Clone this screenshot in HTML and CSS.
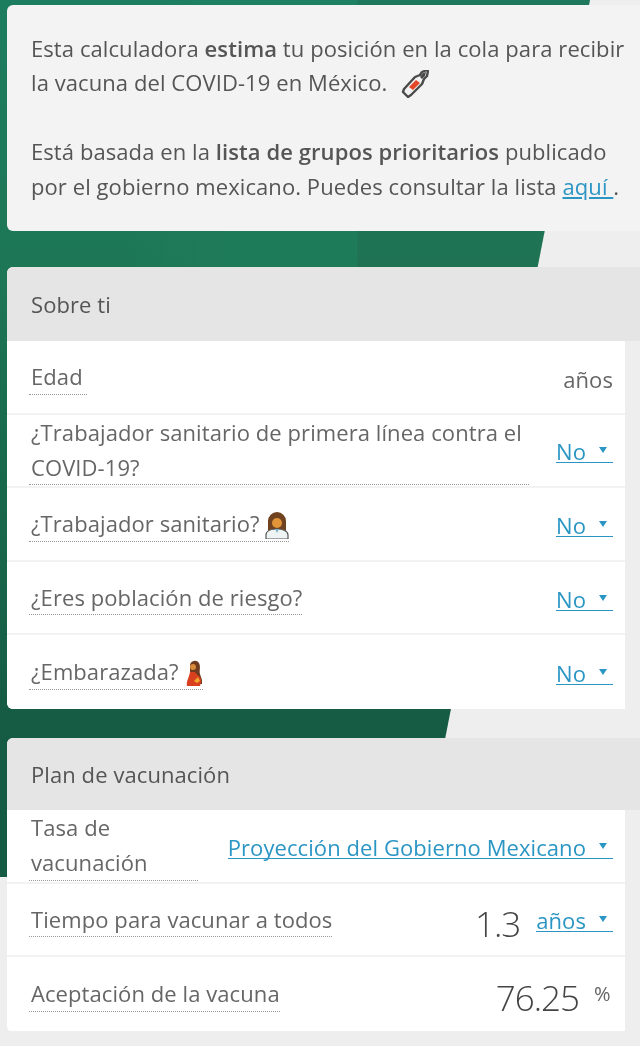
FILE: index.html
```html
<!DOCTYPE html>
<html lang="es">
<head>
<meta charset="utf-8">
<title>Calculadora de vacunación</title>
<link rel="stylesheet" href="styles.css">
</head>
<body>
<div class="backdrop"></div>
<main class="page">
  <section class="card intro">
    <p>Esta calculadora <b>estima</b> tu posición en la cola para recibir<br>la vacuna del COVID-19 en México.
      <svg class="emoji syringe" viewBox="0 0 28 28"><path d="M2 22l5 5 3-2 11-11 2-5 3-3 1-5-1-1-5 2-2 3-5 2L3 19z" fill="#f2f2f2" stroke="#4a4a4a" stroke-width="2.4" stroke-linejoin="round"/><path d="M8 17l7-7 4 3-7 7z" fill="#e2472a"/><path d="M19 7l3-4 3-1-1 4-3 3z" fill="#4a4a4a"/></svg>
      <br><br>Está basada en la <b>lista de grupos prioritarios</b> publicado<br>por el gobierno mexicano. Puedes consultar la lista <a class="link" href="#">aquí </a>.</p>
  </section>

  <section class="card about">
    <h2 class="head">Sobre ti</h2>
    <div class="rows">
      <div class="row"><span class="label age">Edad</span><span class="unit">años</span></div>
      <div class="row"><span class="label wide">¿Trabajador sanitario de primera línea contra el COVID-19?</span><a class="select" href="#">No<i class="caret"></i></a></div>
      <div class="row"><span class="label">¿Trabajador sanitario?
        <svg class="emoji doctor" viewBox="0 0 24 27"><path d="M3 24V9a9 9 0 0 1 18 0v15z" fill="#70421f"/><circle cx="12" cy="11" r="5" fill="#e29538"/><path d="M1 27v-4c0-4 5-6 11-6s11 2 11 6v4z" fill="#eef3f4" stroke="#555" stroke-width="1.2"/><path d="M10 17l2 4 2-4z" fill="#7fb3c8"/></svg></span><a class="select" href="#">No<i class="caret"></i></a></div>
      <div class="row"><span class="label">¿Eres población de riesgo?</span><a class="select" href="#">No<i class="caret"></i></a></div>
      <div class="row"><span class="label">¿Embarazada?
        <svg class="emoji pregnant" viewBox="0 0 17 27"><path d="M4 18V5a5 5 0 0 1 9-2c2 4 0 8 1 11l2 6v4H4z" fill="#6e3b1e"/><circle cx="7" cy="7" r="3" fill="#d98a3a"/><path d="M4 12h5c1 3 7 4 6 10l-1 4H1c-1-5 2-8 3-14z" fill="#d8401f"/><path d="M8 21l4-4 2 4-3 2z" fill="#f0a52e"/></svg></span><a class="select" href="#">No<i class="caret"></i></a></div>
    </div>
  </section>

  <section class="card plan">
    <h2 class="head">Plan de vacunación</h2>
    <div class="rows">
      <div class="row"><span class="label rate">Tasa de vacunación</span><a class="select" href="#">Proyección del Gobierno Mexicano<i class="caret"></i></a></div>
      <div class="row"><span class="label">Tiempo para vacunar a todos</span><span class="value-group"><span class="value">1.3</span><a class="select" href="#">años<i class="caret"></i></a></span></div>
      <div class="row"><span class="label">Aceptación de la vacuna</span><span class="value-group"><span class="value">76.25</span><span class="percent">%</span></span></div>
    </div>
  </section>
</main>
</body>
</html>
```
FILE: styles.css
```css
* { box-sizing: border-box; }
html, body { margin: 0; height: 100%; }
body {
  position: relative;
  height: 1046px;
  overflow: hidden;
  background: #eeeeee;
  color: #555;
  font-family: "Open Sans", "Noto Sans", sans-serif;
  font-size: 22px;
  letter-spacing: .08px;
  line-height: 34.4px;
}
.backdrop {
  position: absolute;
  left: 0; top: 0;
  width: 600px;
  height: 877px;
  background:
    linear-gradient(90deg, rgba(0,0,0,0) 59.4%, rgba(40,40,40,.1) 59.6%) top / 100% 520px no-repeat,
    linear-gradient(90deg, rgba(0,0,0,.03) 21%, rgba(0,0,0,0) 40%) top / 100% 520px no-repeat,
    linear-gradient(180deg, #1d8161 0%, #1e7b59 30%, #1a6b4e 55%, #165b44 82%, #155a43 100%);
  clip-path: polygon(0 0, 590px 0, 418px 877px, 0 877px);
}
.page { position: relative; padding: 5px 0 0 7px; filter: blur(.4px); }
.card { border-radius: 6px 0 0 6px; background: #eeeeee; overflow: hidden; }
.intro { height: 226px; padding: 26px 0 0 24px; background: #f3f3f3; margin-bottom: 36px; }
.intro p { margin: 0; white-space: nowrap; }
.intro b { font-weight: 600; color: #555; }
.about { height: 442px; margin-bottom: 29px; }
.plan { height: 294px; }
.head {
  margin: 0;
  height: 74px;
  padding: 20px 0 0 24px;
  background: #e5e5e5;
  color: #555;
  font-size: 22px;
  font-weight: 400;
  line-height: 34.4px;
}
.plan .head { height: 72px; padding-top: 19px; }
.rows { width: 618px; background: #fff; }
.row {
  display: flex;
  align-items: center;
  justify-content: space-between;
  height: 73.6px;
  padding: 0 12px 0 22px;
  border-bottom: 2px solid #f2f2f2;
}
.row:last-child { border-bottom: 0; }
.label { padding-left: 2px; color: #666; border-bottom: 1px dotted #999; }
.age { width: 58px; flex: none; }
.wide { width: 500px; flex: none; }
.rate { width: 169px; flex: none; line-height: 35px; }
.unit { color: #666; padding-top: 4px; }
.select {
  display: inline-flex;
  align-items: center;
  color: #2b96c4;
  text-decoration: none;
  line-height: 22px;
  padding-top: 3px;
  border-bottom: 1px solid #2b96c4;
  white-space: nowrap;
}
.link { color: #2b96c4; text-decoration: underline; }
.caret {
  margin: 0 6px 0 13px;
  border-left: 4px solid transparent;
  border-right: 4px solid transparent;
  border-top: 6px solid #2b96c4;
  transform: translateY(-1px);
}
.value-group { display: flex; align-items: center; }
.value { padding-top: 9px; color: #444; font-size: 35px; font-weight: 300; letter-spacing: -1px; line-height: 40px; }
.value-group .select { margin-left: 16px; }
.percent { margin-left: 15px; width: 19px; color: #666; font-size: 20px; letter-spacing: 0; }
.emoji { display: inline-block; vertical-align: -7px; }
.syringe { width: 28px; height: 28px; margin-left: 8px; }
.doctor { width: 24px; height: 27px; }
.pregnant { width: 17px; height: 27px; margin-left: 2px; }
```
